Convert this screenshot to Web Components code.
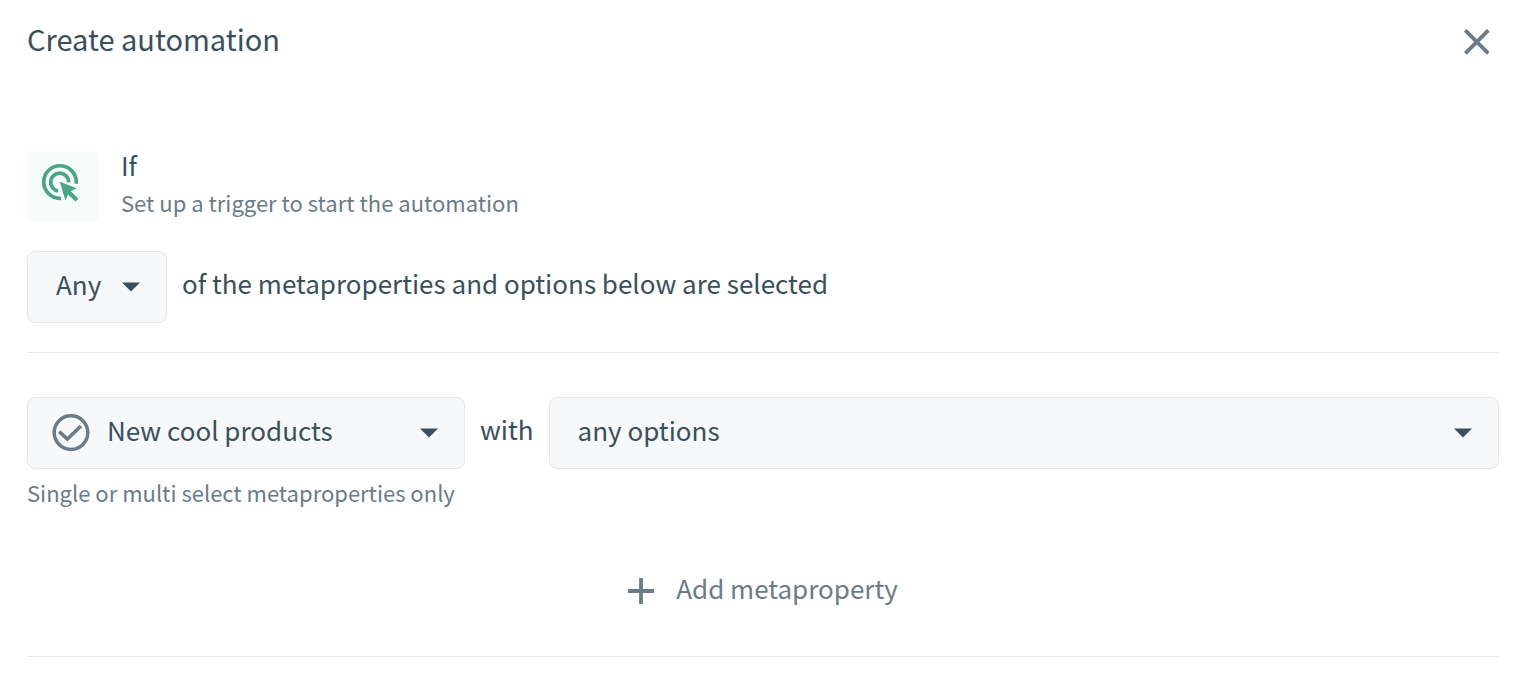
<!DOCTYPE html>
<html lang="en">
<head>
<meta charset="utf-8">
<meta name="viewport" content="width=device-width, initial-scale=1">
<title>Create automation</title>
<style>
  body {
    margin: 0;
    background: #ffffff;
    color: #3a4f5e;
    font-family: "Source Sans Pro", "Noto Sans CJK SC", sans-serif;
    font-size: 26px;
    line-height: 36px;
  }
</style>
</head>
<body>
<automation-dialog heading="Create automation">
  <automation-step heading="If" description="Set up a trigger to start the automation"></automation-step>
  <condition-row>
    <select-field label="Match">
      <option>Any</option>
      <option>All</option>
    </select-field>
    <span>of the metaproperties and options below are selected</span>
  </condition-row>
  <section-divider></section-divider>
  <condition-row>
    <select-field label="Metaproperty" hint="Single or multi select metaproperties only" icon>
      <option>New cool products</option>
    </select-field>
    <span>with</span>
    <select-field label="Options" grow>
      <option>any options</option>
    </select-field>
  </condition-row>
  <add-button>Add metaproperty</add-button>
  <section-divider></section-divider>
</automation-dialog>

<script>
class AutomationDialog extends HTMLElement {
  connectedCallback() {
    this.attachShadow({ mode: "open" }).innerHTML = `
      <style>
        :host {
          display: block;
          padding: 20px 39px 0 27px;
        }

        header {
          display: flex;
          align-items: flex-start;
          justify-content: space-between;
          margin-bottom: 86px;
        }

        h1 {
          margin: 0;
          font-size: 29px;
          line-height: 36px;
          font-weight: 400;
        }

        button {
          display: flex;
          align-items: center;
          justify-content: center;
          width: 44px;
          height: 44px;
          padding: 0;
          border: 0;
          background: none;
          color: #6b7b88;
          cursor: pointer;
        }
      </style>
      <header>
        <h1></h1>
        <button type="button" aria-label="Close">
          <svg width="26" height="26" viewBox="0 0 26 26" fill="none" stroke="currentColor" stroke-width="3.8">
            <path d="M1.3 1.3 24.3 24.3M24.3 1.3 1.3 24.3"/>
          </svg>
        </button>
      </header>
      <main><slot></slot></main>
    `;
    this.shadowRoot.querySelector("h1").textContent = this.getAttribute("heading");
  }
}

class AutomationStep extends HTMLElement {
  connectedCallback() {
    this.attachShadow({ mode: "open" }).innerHTML = `
      <style>
        :host {
          display: flex;
          align-items: flex-start;
          gap: 22px;
          margin-bottom: 29px;
        }

        .tile {
          flex: none;
          box-sizing: border-box;
          width: 72px;
          height: 72px;
          padding: 12px;
          border-radius: 8px;
          background: #f5fcfa;
          color: #4aa588;
        }

        svg {
          display: block;
        }

        h2,
        p {
          margin: 0;
          font-weight: 400;
        }

        h2 {
          font-size: 26px;
          line-height: 30px;
        }

        p {
          margin-top: 4px;
          color: #6b7b88;
          font-size: 22px;
        }
      </style>
      <div class="tile">
        <svg width="48" height="48" viewBox="0 0 48 48" fill="none" stroke="currentColor" stroke-width="3.7">
          <path d="M37.2 21.8A16.3 16.3 0 1 0 22 36.3"/>
          <path d="M29.7 20.2A9 9 0 1 0 19.2 29"/>
          <path d="M20.8 19.8 37.6 26.2 31.8 29.2 39.4 36.8 36.4 39.6 29 32.4 26.4 38.4Z" fill="currentColor" stroke="none"/>
        </svg>
      </div>
      <div>
        <h2></h2>
        <p></p>
      </div>
    `;
    this.shadowRoot.querySelector("h2").textContent = this.getAttribute("heading");
    this.shadowRoot.querySelector("p").textContent = this.getAttribute("description");
  }
}

class ConditionRow extends HTMLElement {
  connectedCallback() {
    this.attachShadow({ mode: "open" }).innerHTML = `
      <style>
        :host {
          display: flex;
          align-items: flex-start;
          gap: 15px;
        }

        ::slotted(span) {
          padding-top: 14px;
        }
      </style>
      <slot></slot>
    `;
  }
}

class SelectField extends HTMLElement {
  connectedCallback() {
    this.attachShadow({ mode: "open" }).innerHTML = `
      <style>
        :host {
          display: block;
        }

        :host([icon]) {
          flex-basis: 438px;
        }

        :host([grow]) {
          flex: 1;
          min-width: 0;
        }

        .control {
          display: grid;
          align-items: center;
        }

        .control > * {
          grid-area: 1 / 1;
        }

        select {
          box-sizing: border-box;
          width: 100%;
          height: 72px;
          padding: 0 64px 6px 28px;
          border: 1px solid #e4e8eb;
          border-radius: 8px;
          background: #f6f8fa;
          color: inherit;
          font: inherit;
          appearance: none;
          cursor: pointer;
        }

        select:focus-visible {
          outline: 2px solid #4aa588;
        }

        :host([icon]) select {
          padding-left: 79px;
        }

        svg {
          pointer-events: none;
        }

        .arrow {
          justify-self: end;
          margin-right: 27px;
        }

        .check {
          display: none;
          margin-left: 24px;
          color: #6b7b88;
        }

        :host([icon]) .check {
          display: block;
        }

        .hint {
          margin: 5px 0 0;
          color: #6b7b88;
          font-size: 22px;
        }
      </style>
      <div class="control">
        <select></select>
        <svg class="check" width="40" height="40" viewBox="0 0 40 40" fill="none" stroke="currentColor">
          <circle cx="20" cy="19.6" r="16.8" stroke-width="3.5"/>
          <path d="M8.2 18.6 16.4 26 30 13" stroke-width="3.5"/>
        </svg>
        <svg class="arrow" width="18" height="10" viewBox="0 0 18 10" fill="currentColor">
          <path d="M0 .5h18L9 9.5Z"/>
        </svg>
      </div>
    `;

    const select = this.shadowRoot.querySelector("select");
    select.setAttribute("aria-label", this.getAttribute("label"));
    select.append(...this.querySelectorAll("option"));

    if (this.hasAttribute("hint")) {
      const hint = document.createElement("p");
      hint.className = "hint";
      hint.id = "hint";
      hint.textContent = this.getAttribute("hint");
      select.setAttribute("aria-describedby", "hint");
      this.shadowRoot.append(hint);
    }
  }
}

class AddButton extends HTMLElement {
  connectedCallback() {
    this.attachShadow({ mode: "open" }).innerHTML = `
      <style>
        :host {
          display: flex;
          justify-content: center;
          margin: 60px 0 50px;
        }

        button {
          display: flex;
          align-items: center;
          gap: 22px;
          padding: 0;
          border: 0;
          background: none;
          color: #6b7b88;
          font: inherit;
          cursor: pointer;
        }

        svg {
          margin-top: 5px;
        }
      </style>
      <button type="button">
        <svg width="26" height="26" viewBox="0 0 26 26" fill="none" stroke="currentColor" stroke-width="3.8">
          <path d="M13 0v26M0 13h26"/>
        </svg>
        <slot></slot>
      </button>
    `;
  }
}

class SectionDivider extends HTMLElement {
  connectedCallback() {
    this.attachShadow({ mode: "open" }).innerHTML = `
      <style>
        :host {
          display: block;
          margin: 29px 0 44px;
          border-top: 1px solid #e4e6e8;
        }
      </style>
    `;
  }
}

customElements.define("automation-dialog", AutomationDialog);
customElements.define("automation-step", AutomationStep);
customElements.define("condition-row", ConditionRow);
customElements.define("select-field", SelectField);
customElements.define("add-button", AddButton);
customElements.define("section-divider", SectionDivider);
</script>
</body>
</html>
